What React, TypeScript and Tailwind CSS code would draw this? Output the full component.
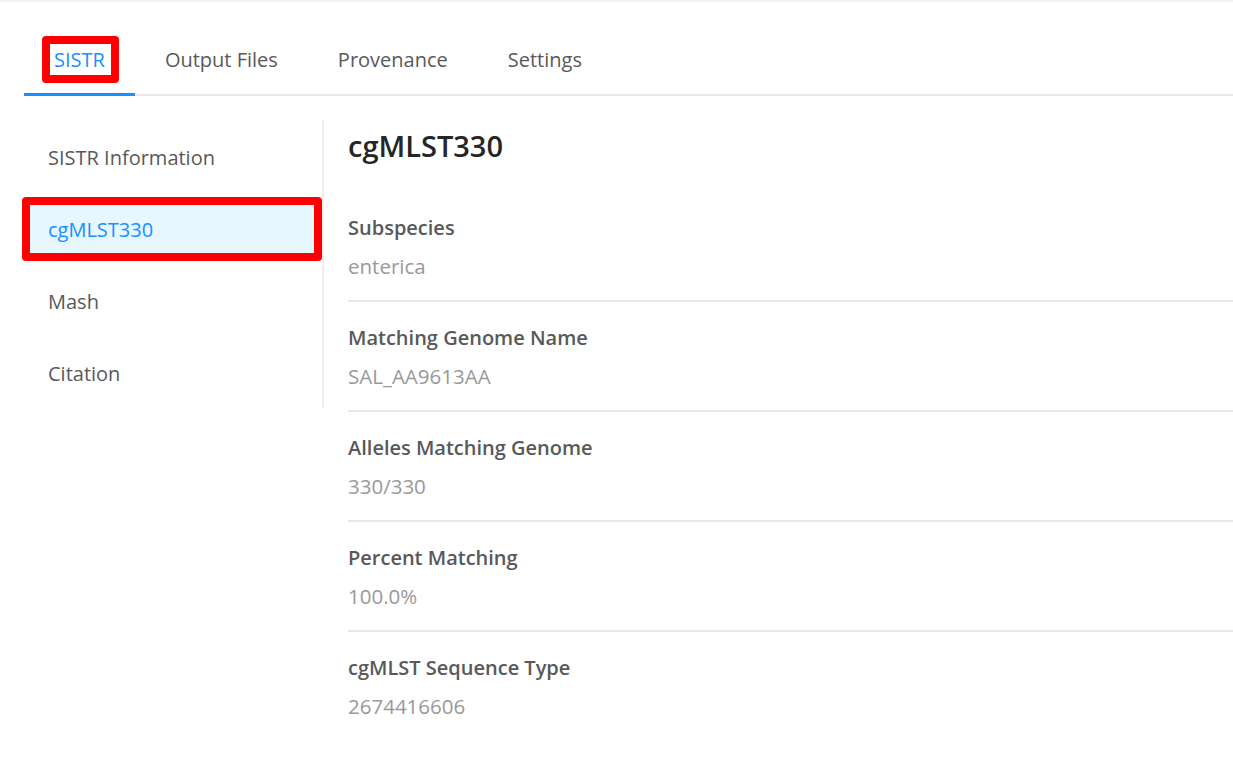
import React from "react";

const tabs = ["SISTR", "Output Files", "Provenance", "Settings"];
const menu = ["SISTR Information", "cgMLST330", "Mash", "Citation"];
const items = [
  { label: "Subspecies", value: "enterica" },
  { label: "Matching Genome Name", value: "SAL_AA9613AA" },
  { label: "Alleles Matching Genome", value: "330/330" },
  { label: "Percent Matching", value: "100.0%" },
  { label: "cgMLST Sequence Type", value: "2674416606" },
];

export default function App() {
  return (
    <div
      className="w-[1233px] h-[762px] bg-white overflow-hidden border-t-2 border-[#f2f2f2]"
      style={{ fontFamily: '"Open Sans", "Noto Sans", sans-serif' }}
    >
      <div className="pl-[24px] pt-[24px]">
        <div className="flex border-b-2 border-[#e8e8e8]">
          {tabs.map((t, i) => (
            <div
              key={t}
              className={
                "relative px-[30px] h-[70px] flex items-center text-[20px] -mb-[2px] " +
                (i === 0
                  ? "text-[#1890ff] border-b-[3px] border-[#1890ff]"
                  : "text-[#595959] border-b-[3px] border-transparent")
              }
            >
              <span className="relative">
                {t}
                {i === 0 && (
                  <span className="absolute -left-[12px] -right-[14px] -top-[9px] -bottom-[8px] border-[8px] border-[#ff0000] rounded-[4px]" />
                )}
              </span>
            </div>
          ))}
        </div>
        <div className="flex mt-[24px]">
          <div className="w-[300px] shrink-0 border-r-2 border-[#efefef] pt-[9px] pb-[5px] self-start flex flex-col gap-[14px]">
            {menu.map((m, i) => (
              <div
                key={m}
                className={
                  "relative h-[58px] flex items-center pl-[24px] text-[20px] " +
                  (i === 1 ? "bg-[#e6f7ff] text-[#1890ff]" : "text-[#595959]")
                }
              >
                {m}
                {i === 1 && (
                  <span className="absolute -left-[2px] right-0 -top-[4px] -bottom-[2px] border-[8px] border-[#ff0000] rounded-[4px]" />
                )}
              </div>
            ))}
          </div>
          <div className="flex-1 pl-[24px] pt-[7px]">
            <div className="text-[29px] font-semibold text-[#262626] leading-[38px] mb-[27px]">
              cgMLST330
            </div>
            {items.map((it, i) => (
              <div
                key={it.label}
                className={
                  "pt-[20px] pb-[18px] " +
                  (i < items.length - 1 ? "border-b-2 border-[#e8e8e8]" : "")
                }
              >
                <div className="text-[20px] font-semibold text-[#595959] leading-[31px] mb-[8px]">
                  {it.label}
                </div>
                <div className="text-[20.5px] text-[#999999] leading-[31px]">
                  {it.value}
                </div>
              </div>
            ))}
          </div>
        </div>
      </div>
    </div>
  );
}
